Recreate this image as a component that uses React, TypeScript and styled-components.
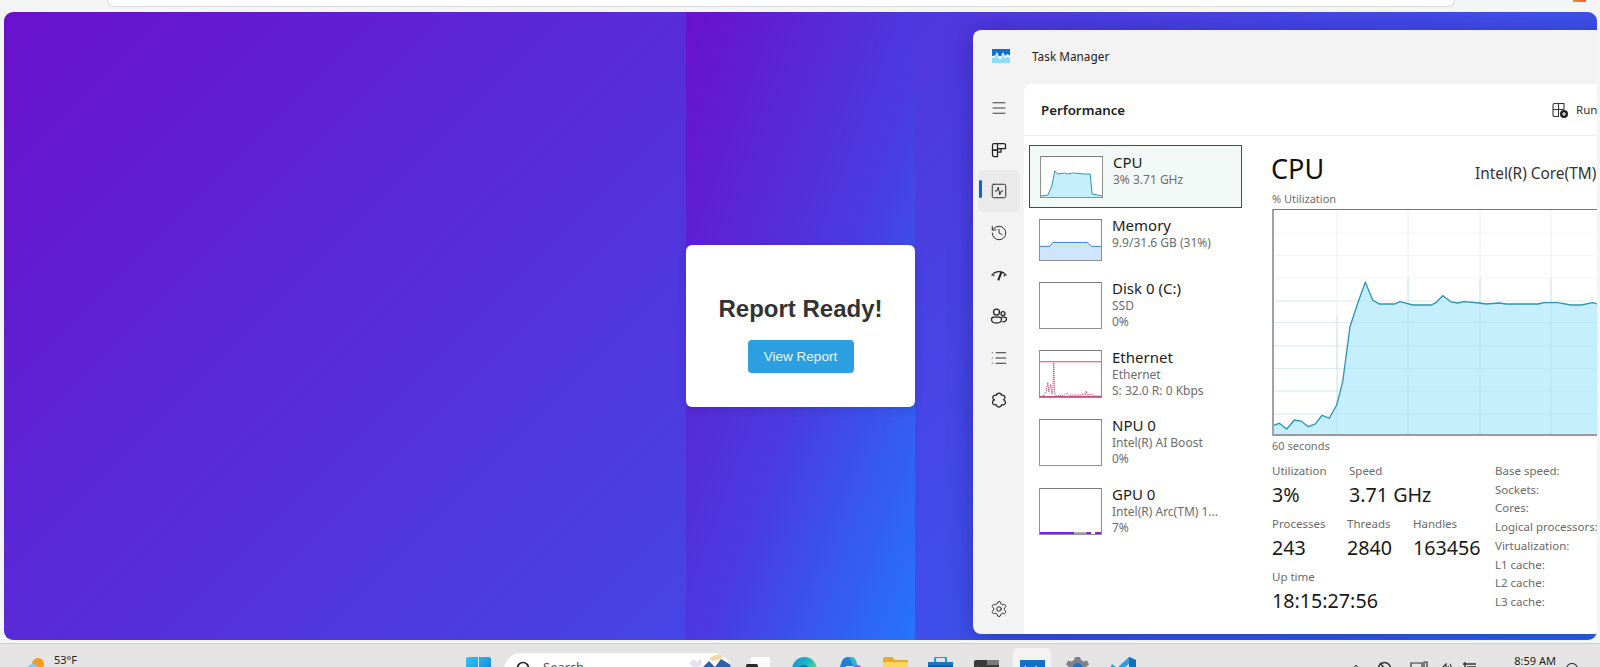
import React from "react";
import styled, { createGlobalStyle } from "styled-components";
import { Menu, SquareActivity, History, List, Settings } from "lucide-react";

const Global = createGlobalStyle`
  html, body { margin: 0; padding: 0; height: 100%; background: #f3f6f4; overflow: hidden; }
  #root { height: 100%; }
`;

const SEGOE = `"Noto Sans", "Open Sans", sans-serif`;

const Page = styled.div`
  width: 1600px;
  height: 667px;
  display: flex;
  flex-direction: column;
  overflow: hidden;
  background: #f3f6f4;
  font-family: ${SEGOE};
`;
const TopStrip = styled.div`
  height: 12px;
  flex: none;
  padding-left: 107px;
  display: flex;
`;
const AddressPill = styled.div`
  width: 1348px;
  height: 7px;
  background: #fff;
  border: 1px solid #dcdcdc;
  border-top: 0;
  border-radius: 0 0 14px 14px;
  box-sizing: border-box;
`;
const CornerBit = styled.div`
  width: 13px;
  height: 2px;
  margin-left: 118px;
  background: linear-gradient(90deg, #f28a3c, #e9642a);
`;
const Desktop = styled.div`
  height: 628px;
  flex: none;
  margin: 0 3px 3px 4px;
  border-radius: 9px;
  overflow: hidden;
  position: relative;
  background: linear-gradient(135deg, #6a11cb 0%, #2575fc 100%);
  background-size: 1800px 700px;
  display: grid;
  grid-template-columns: 682px 229px 1fr;
`;
const Band = styled.div`
  grid-column: 2;
  background: linear-gradient(to bottom right, #6a11cb 0%, #4a3be0 55%, #2575fc 100%);
  display: flex;
  align-items: center;
  justify-content: center;
`;
const Card = styled.div`
  width: 229px;
  height: 162px;
  padding-top: 16px;
  box-sizing: border-box;
  background: #fff;
  border-radius: 6px;
  display: flex;
  flex-direction: column;
  align-items: center;
  justify-content: center;
  box-shadow: 0 2px 8px rgba(0, 0, 0, 0.12);
  font-family: "Liberation Sans", Arial, sans-serif;
`;
const CardTitle = styled.h2`
  margin: 0 0 17px;
  font-size: 24px;
  line-height: 28px;
  font-weight: 700;
  color: #333;
`;
const ViewButton = styled.button`
  width: 106px;
  height: 33px;
  padding: 0;
  border: 0;
  border-radius: 4px;
  background: #2b9fe0;
  color: #eef7fc;
  font-family: inherit;
  font-size: 13.5px;
`;
const Win = styled.div`
  position: absolute;
  left: 969px;
  top: 18px;
  width: 700px;
  height: 604px;
  background: #f3f3f3;
  border-radius: 8px;
  box-shadow: 0 4px 24px rgba(0, 10, 80, 0.35);
  display: flex;
  flex-direction: column;
  overflow: hidden;
  color: #1b1b1b;
`;
const TitleBar = styled.div`
  height: 54px;
  flex: none;
  display: flex;
  align-items: center;
  padding: 0 0 2px 19px;
  box-sizing: border-box;
`;
const TitleText = styled.span`
  margin-left: 22px;
  font-size: 11.8px;
  color: #222;
`;
const MinGlyph = styled.span`
  width: 9px;
  height: 1px;
  margin-left: 488px;
  margin-top: -20px;
  background: #222;
`;
const WinBody = styled.div`
  flex: 1;
  display: flex;
  min-height: 0;
`;
const SideNav = styled.nav`
  width: 51px;
  flex: none;
  display: flex;
  flex-direction: column;
  align-items: center;
  padding-top: 3px;
  box-sizing: border-box;
  color: #222;
`;
const NavItem = styled.div<{ $active?: boolean; $bottom?: boolean }>`
  width: 42px;
  height: 41.7px;
  flex: none;
  display: flex;
  align-items: center;
  justify-content: center;
  border-radius: 6px;
  position: relative;
  margin-top: ${(p) => (p.$bottom ? "auto" : "0")};
  margin-bottom: ${(p) => (p.$bottom ? "4px" : "0")};
  background: ${(p) => (p.$active ? "#eaeaea" : "transparent")};
  ${(p) =>
    p.$active &&
    `&::before { content: ""; position: absolute; left: 1px; top: 10px; width: 3px; height: 18px; border-radius: 2px; background: #0f62c6; }`}
`;
const Main = styled.div`
  flex: 1;
  background: #fff;
  border-top-left-radius: 8px;
  display: flex;
  flex-direction: column;
  min-width: 0;
`;
const MainHeader = styled.header`
  height: 52px;
  flex: none;
  box-sizing: border-box;
  display: flex;
  align-items: center;
  padding-left: 17px;
  border-bottom: 1px solid #f1f1f1;
`;
const HeaderTitle = styled.h1`
  margin: 0;
  width: 510px;
  font-size: 13.3px;
  font-weight: 600;
  color: #222;
`;
const RunLabel = styled.span`
  margin-left: 7px;
  font-size: 11.5px;
  color: #333;
`;
const Content = styled.div`
  flex: 1;
  display: flex;
  min-height: 0;
`;
const ListCol = styled.div`
  width: 248px;
  flex: none;
  padding: 9px 0 0 5px;
  box-sizing: border-box;
`;
const Row = styled.div<{ $h: number; $selected?: boolean }>`
  width: 213px;
  height: ${(p) => p.$h}px;
  box-sizing: border-box;
  display: flex;
  align-items: center;
  padding-left: 10px;
  border: ${(p) => (p.$selected ? "1.5px solid #4a4a4a" : "0")};
  background: ${(p) => (p.$selected ? "#f3f9f6" : "transparent")};
`;
const Thumb = styled.div<{ $h: number }>`
  width: 63px;
  height: ${(p) => p.$h}px;
  flex: none;
  box-sizing: border-box;
  border: 1.5px solid #8f8f8f;
  border-top-color: #7c7c7c;
  background: #fff;
  overflow: hidden;
  & > svg { display: block; width: 100%; height: 100%; }
`;
const RowText = styled.div<{ $lift: number }>`
  margin-left: 10px;
  padding-bottom: ${(p) => p.$lift}px;
  display: flex;
  flex-direction: column;
`;
const RowName = styled.span`
  font-size: 15px;
  line-height: 20px;
  color: #1c1c1c;
`;
const RowSub = styled.span`
  font-size: 12px;
  line-height: 16px;
  color: #6d6d6d;
  white-space: nowrap;
`;
const Detail = styled.div`
  flex: 1;
  min-width: 0;
  padding-top: 15px;
`;
const DetailHead = styled.div`
  height: 40px;
  display: flex;
  align-items: baseline;
`;
const BigTitle = styled.span`
  width: 204px;
  margin-left: -1px;
  font-size: 27px;
  line-height: 36px;
  color: #111;
`;
const CpuModel = styled.span`
  font-size: 15.4px;
  color: #333;
  white-space: nowrap;
`;
const SmallNote = styled.div`
  font-size: 11px;
  line-height: 16px;
  color: #6d6d6d;
`;
const ChartBox = styled.div`
  width: 340px;
  height: 227px;
  margin-top: 2px;
  margin-bottom: 2px;
  box-sizing: border-box;
  border-left: 2px solid #a2a2a2;
  border-top: 1px solid #777;
  border-bottom: 2px solid #9a9a9a;
  & > svg { display: block; }
`;
const StatsArea = styled.div`
  margin-top: 8px;
  display: flex;
`;
const StatsCol = styled.div`
  width: 223px;
  flex: none;
  display: flex;
  flex-direction: column;
  gap: 5px;
`;
const StatRow = styled.div`
  display: flex;
`;
const Stat = styled.div<{ $w?: number }>`
  width: ${(p) => (p.$w ? `${p.$w}px` : "auto")};
  flex: none;
  display: flex;
  flex-direction: column;
`;
const StatLabel = styled.span`
  font-size: 11.5px;
  line-height: 18px;
  color: #6a6a6a;
`;
const StatValue = styled.span`
  font-size: 19.7px;
  line-height: 30px;
  color: #1a1a1a;
  white-space: nowrap;
`;
const SpecCol = styled.div`
  display: flex;
  flex-direction: column;
  font-size: 11.5px;
  line-height: 18.7px;
  color: #6a6a6a;
  white-space: nowrap;
`;
const Taskbar = styled.footer`
  height: 24px;
  flex: none;
  box-sizing: border-box;
  border-top: 1px solid #cfcfcf;
  background: #e4e4e4;
  display: flex;
  overflow: hidden;
`;
const WeatherGroup = styled.div`
  width: 466px;
  flex: none;
  padding-left: 27px;
  box-sizing: border-box;
  display: flex;
`;
const WeatherText = styled.span`
  margin-left: 9px;
  margin-top: 9px;
  font-size: 11px;
  line-height: 14px;
  color: #222;
`;
const Slot = styled.div<{ $top: number; $active?: boolean }>`
  width: 25px;
  flex: none;
  margin-top: ${(p) => p.$top}px;
  position: relative;
  ${(p) =>
    p.$active &&
    `&::before { content: ""; position: absolute; left: -7px; right: -6px; top: -12px; height: 40px; background: #f3f3f3; border-radius: 4px; }`}
  & > svg { display: block; position: relative; }
`;
const SearchPill = styled.div`
  width: 227px;
  height: 34px;
  margin: 9px 15px 0 13px;
  flex: none;
  background: #fff;
  border-radius: 17px;
  display: flex;
  align-items: flex-start;
  padding-left: 12px;
  box-sizing: border-box;
  overflow: hidden;
`;
const SearchText = styled.span`
  margin-left: 11px;
  margin-top: 5px;
  font-size: 13px;
  line-height: 18px;
  color: #555;
`;
const SearchArt = styled.div`
  margin-left: auto;
`;
const AppRow = styled.div`
  display: flex;
  gap: 20.6px;
`;
const Tray = styled.div`
  margin-left: auto;
  padding-right: 22px;
  display: flex;
`;
const TrayItem = styled.div<{ $ml: number; $top: number }>`
  display: flex;
  margin-left: ${(p) => p.$ml}px;
  margin-top: ${(p) => p.$top}px;
  color: #333;
  & > svg { display: block; }
`;
const Clock = styled.span`
  font-size: 11px;
  line-height: 14px;
  color: #222;
  white-space: nowrap;
`;

const chartRaw: [number, number][] = [
  [38, 1008], [60, 1000], [82, 1017], [105, 990], [125, 993], [147, 1010], [168, 1002], [188, 976], [210, 985],
  [232, 945], [250, 875], [272, 710], [295, 640], [318, 577], [340, 630], [360, 642], [405, 642], [422, 635],
  [460, 645], [515, 645], [530, 638], [550, 617], [575, 636], [595, 639], [615, 635], [660, 639], [680, 642],
  [720, 639], [740, 642], [835, 642], [855, 638], [895, 638], [935, 645], [965, 645], [1000, 638], [1030, 646],
  [1060, 646],
];
const chartPts = chartRaw.map(([x, y]) => `${(x / 3 - 14.67).toFixed(1)},${(y / 3 - 120).toFixed(1)}`).join(" ");
const vLines = [63, 134, 206, 277];
const hLines = [23, 45.5, 68, 91, 112.5, 136, 158.5, 181, 204];

const CpuChart = () => (
  <svg width="338" height="224" viewBox="0 0 338 224">
    {hLines.map((y) => (
      <line key={y} x1="0" x2="338" y1={y} y2={y} stroke="#f4f4f4" />
    ))}
    {vLines.map((x) => (
      <line key={x} y1="0" y2="224" x1={x} x2={x} stroke="#eeeeee" />
    ))}
    <polygon points={`0,224 ${chartPts} 338,224`} fill="#c6effd" />
    {hLines.filter((y) => y > 80).map((y) => (
      <line key={y} x1="0" x2="338" y1={y} y2={y} stroke="#aedbe9" strokeOpacity="0.35" />
    ))}
    {vLines.map((x) => (
      <line key={x} y1={x === 63 ? 105 : 68} y2="224" x1={x} x2={x} stroke="#aedbe9" strokeOpacity="0.55" />
    ))}
    <polyline points={chartPts} fill="none" stroke="#2b93b4" strokeWidth="1.3" />
  </svg>
);

const CpuThumb = () => (
  <svg viewBox="0 0 62 40" preserveAspectRatio="none">
    <polygon points="0,39 7,38 11,29 14,14 17,17 50,17 52,37 62,39 62,40 0,40" fill="#c6effd" />
    <polyline points="0,39 7,38 11,29 14,14 17,17 24,16 27,17 33,16 44,17 50,17 52,37 62,39" fill="none" stroke="#2b93b4" />
  </svg>
);
const MemThumb = () => (
  <svg viewBox="0 0 62 41" preserveAspectRatio="none">
    <polygon points="0,27 10,27 13,23 48,23 52,27 62,27 62,41 0,41" fill="#cfe5fb" />
    <polyline points="0,27 10,27 13,23 48,23 52,27 62,27" fill="none" stroke="#2f7fe0" />
  </svg>
);
const EthThumb = () => (
  <svg viewBox="0 0 62 47" preserveAspectRatio="none">
    <line x1="0" x2="62" y1="11" y2="11" stroke="#d63c74" />
    <polyline
      points="3,46 6,42 8,32 9,42 11,34 12,44 13,40 14,12 15,44 16,46 25,45 27,43 29,45 40,45 46,44 47,41 48,45 52,44 55,46 62,46"
      fill="none"
      stroke="#d63c74"
      strokeWidth="1"
      strokeDasharray="1.2 0.8"
    />
    <line x1="0" x2="62" y1="46.5" y2="46.5" stroke="#c04a78" />
  </svg>
);
const GpuThumb = () => (
  <svg viewBox="0 0 62 46" preserveAspectRatio="none">
    <line x1="0" x2="35" y1="45" y2="45" stroke="#7a22d8" strokeWidth="2" />
    <line x1="35" x2="47" y1="45" y2="45" stroke="#a9a9a9" strokeWidth="2" />
    <line x1="47" x2="52" y1="45" y2="45" stroke="#7a22d8" strokeWidth="2" />
    <line x1="56" x2="62" y1="45" y2="45" stroke="#7a22d8" strokeWidth="2" />
  </svg>
);

const ico = { width: 18, height: 18, viewBox: "0 0 18 18", fill: "none", stroke: "currentColor", strokeWidth: 1.25 } as const;
const ProcIcon = () => (
  <svg {...ico}>
    <path d="M2.500 4A1.500 1.500 0 0 1 4 2.500h3.500V9h-5V4Z" />
    <path d="M7.500 2.500H14A1.500 1.500 0 0 1 15.500 4v3.500h-8" />
    <path d="M2.500 9h5v6.500H4A1.500 1.500 0 0 1 2.500 14V9Z" />
    <path d="M7.500 7.500H11V11H7.500" />
  </svg>
);
const GaugeIcon = () => (
  <svg {...ico}>
    <path d="M1.500 9.500C3.500 6.800 6 5.500 9 5.500s5.500 1.300 7.500 4" />
    <path d="M11.500 5.800 8.200 14.400" strokeWidth="2" />
    <path d="M3 10l1.300-1M15 10l-1.300-1" />
  </svg>
);
const UsersIcon = () => (
  <svg {...ico}>
    <circle cx="6.500" cy="5" r="3" />
    <circle cx="13" cy="6.500" r="2" />
    <path d="M1.500 12.500c0-1.500 1-2.500 2.300-2.500h5.400c1.300 0 2.300 1 2.300 2.500 0 2-2 3.500-5 3.500s-5-1.500-5-3.500Z" />
    <path d="M11.500 10h3c1.200 0 2 .8 2 2 0 1.700-1.500 2.800-4.200 2.800" />
  </svg>
);
const ServicesIcon = () => (
  <svg {...ico}>
    <path d="M9 2c1.400 0 2.300 1 2.500 2.200 1.500-.5 3.500.4 3.500 2.300 0 1-.6 1.800-1.300 2.300.9.500 1.800 1.300 1.800 2.600 0 2-2 3-3.700 2.400C11.300 15.200 10.300 16 9 16c-1.400 0-2.500-1-2.800-2.200-1.700.6-3.700-.4-3.700-2.400 0-1.300.8-2.100 1.700-2.500-.8-.5-1.400-1.400-1.400-2.400 0-1.900 2-2.800 3.600-2.300C6.600 3 7.600 2 9 2Z" />
  </svg>
);

const TmLogo = ({ w = 18, h = 14 }: { w?: number; h?: number }) => (
  <svg width={w} height={h} viewBox="0 0 18 14" preserveAspectRatio="xMidYMin slice">
    <rect width="18" height="7" fill="#1170cf" />
    <rect y="7" width="18" height="7" fill="#8ddcf8" />
    <path d="M0 7 3 6.500 5 3 7 7.500 9 7.500 11 3 13 7 15 5 18 6.500 18 9 15 7.500 13 9.500 11 6 9 10 7 10 5 6 3 8.500 0 9Z" fill="#eefaff" />
  </svg>
);
const RunIcon = () => (
  <svg width="18" height="18" viewBox="0 0 18 18" fill="none" stroke="#333" strokeWidth="1.100">
    <path d="M2 4a1.500 1.500 0 0 1 1.500-1.500H13V8M7.500 2.500V15M2 8.500h11M2 4v10a1.500 1.500 0 0 0 1.500 1.500H8" />
    <circle cx="13" cy="13" r="4" fill="#222" stroke="none" />
    <path d="M13 11v4M11 13h4" stroke="#fff" />
  </svg>
);

const StartIcon = () => (
  <svg width="25" height="25" viewBox="0 0 25 25">
    <defs>
      <linearGradient id="st" x1="0" y1="0" x2="1" y2="1">
        <stop offset="0" stopColor="#35c3f6" />
        <stop offset="1" stopColor="#0a78d4" />
      </linearGradient>
    </defs>
    <path d="M0 2 Q0 0 2 0H12V12H0ZM13 0H23Q25 0 25 2V12H13ZM0 13H12V25H2Q0 25 0 23ZM13 13H25V23Q25 25 23 25H13Z" fill="url(#st)" />
  </svg>
);
const TaskViewIcon = () => (
  <svg width="25" height="25" viewBox="0 0 25 25">
    <rect x="5" y="0" width="19" height="20" rx="1.500" fill="#fbfbfb" />
    <rect x="0" y="7" width="12" height="18" rx="1.500" fill="#2b2b2b" />
  </svg>
);
const EdgeIcon = () => (
  <svg width="25" height="25" viewBox="0 0 25 25">
    <defs>
      <linearGradient id="ed" x1="0" y1="0" x2="1" y2="0.6">
        <stop offset="0" stopColor="#1a8ac8" />
        <stop offset="0.55" stopColor="#1fb6c9" />
        <stop offset="1" stopColor="#6fdc6a" />
      </linearGradient>
    </defs>
    <circle cx="12.500" cy="12.500" r="12.500" fill="url(#ed)" />
    <path d="M5 12c2-5 11-6 13 1-3-2-9-3-13-1Z" fill="#1273bd" />
  </svg>
);
const CopilotIcon = () => (
  <svg width="25" height="25" viewBox="0 0 25 25">
    <path d="M5 4Q7 0 11 0h3l3 9H9L4 25Q0 22 1 15Z" fill="#1d7fd6" />
    <path d="M11 0h3Q18 0 19 4l3 8-5-1-3-7Q13 1 11 0Z" fill="#26b8c9" />
    <path d="M17 8h4q4 0 4 6 0 4-3 8l-6 3 2-6Z" fill="#c94fd0" />
  </svg>
);
const FolderIcon = () => (
  <svg width="25" height="25" viewBox="0 0 25 25">
    <path d="M0 2Q0 0 2 0H9L12 3H25V8H0Z" fill="#e9a92b" />
    <rect x="0" y="5" width="25" height="20" rx="1.500" fill="#fbd661" />
  </svg>
);
const StoreIcon = () => (
  <svg width="25" height="25" viewBox="0 0 25 25">
    <path d="M7 5V2Q7 0 9 0H16Q18 0 18 2V5" fill="none" stroke="#18a0d8" strokeWidth="2" />
    <rect x="0" y="5" width="25" height="20" rx="2" fill="#0f5fa8" />
    <rect x="0" y="5" width="25" height="3" fill="#1876c4" />
  </svg>
);
const TerminalIcon = () => (
  <svg width="25" height="25" viewBox="0 0 25 25">
    <rect x="0" y="0" width="25" height="25" rx="2" fill="#3a3a3a" />
    <rect x="13" y="0" width="12" height="5" fill="#7a7a7a" />
    <path d="M3 7l4 3-4 3" stroke="#fff" fill="none" strokeWidth="1.200" />
  </svg>
);
const GearIcon = () => (
  <svg width="25" height="25" viewBox="0 0 25 25">
    <path d="M10 0h5l1 3 3 1.500 3-1 2 4-2.500 2v4l2.500 2-2 4-3-1L16 20l-1 5h-5l-1-5-3-1.500-3 1-2-4 2.500-2v-4L1 7.500l2-4 3 1L9 3Z" fill="#7d8388" />
    <circle cx="12.500" cy="11" r="5" fill="#1f6fc4" />
  </svg>
);
const CodeIcon = () => (
  <svg width="25" height="25" viewBox="0 0 25 25">
    <path d="M18 0 25 3V22L18 25 6 14 1 18 0 16V9L1 7 6 11Z" fill="#2b9fe6" />
    <path d="M18 0 25 3V22L18 25Z" fill="#1173bd" />
    <path d="M18 7v11l-7-5.500Z" fill="#e4e4e4" />
  </svg>
);
const WeatherIcon = () => (
  <svg width="18" height="22" viewBox="0 0 18 22" style={{ marginTop: 14 }}>
    <circle cx="11" cy="6" r="6" fill="#f49a1c" />
    <ellipse cx="6" cy="11" rx="6" ry="5" fill="#8fc6ee" />
  </svg>
);
const SearchGlyph = () => (
  <svg width="16" height="16" viewBox="0 0 16 16" fill="none" stroke="#222" strokeWidth="1.700" style={{ marginTop: 8 }}>
    <circle cx="7" cy="7" r="5.500" />
    <path d="M11 11l4 4" />
  </svg>
);
const SearchScene = () => (
  <svg width="42" height="24" viewBox="0 0 42 24" style={{ display: "block" }}>
    <path d="M14 14 20 8l6 6 6-8 10 6v12H14Z" fill="#2f5fa8" />
    <path d="M20 6q6-6 14-4l-2 4-8 2Z" fill="#f2d9a6" />
    <path d="M0 10l5-4 3 3 4-3 1 6-8 3Z" fill="#e9dff0" />
  </svg>
);

export default function App() {
  return (
    <Page>
      <Global />
      <TopStrip>
        <AddressPill />
        <CornerBit />
      </TopStrip>
      <Desktop>
        <Band>
          <Card>
            <CardTitle>Report Ready!</CardTitle>
            <ViewButton>View Report</ViewButton>
          </Card>
        </Band>
        <Win>
          <TitleBar>
            <TmLogo />
            <TitleText>Task Manager</TitleText>
            <MinGlyph />
          </TitleBar>
          <WinBody>
            <SideNav>
              <NavItem><Menu size={18} strokeWidth={1.15} /></NavItem>
              <NavItem><ProcIcon /></NavItem>
              <NavItem $active><SquareActivity size={18} strokeWidth={1.25} /></NavItem>
              <NavItem><History size={18} strokeWidth={1.25} /></NavItem>
              <NavItem><GaugeIcon /></NavItem>
              <NavItem><UsersIcon /></NavItem>
              <NavItem><List size={18} strokeWidth={1.25} /></NavItem>
              <NavItem><ServicesIcon /></NavItem>
              <NavItem $bottom><Settings size={18} strokeWidth={1.25} /></NavItem>
            </SideNav>
            <Main>
              <MainHeader>
                <HeaderTitle>Performance</HeaderTitle>
                <RunIcon />
                <RunLabel>Run</RunLabel>
              </MainHeader>
              <Content>
                <ListCol>
                  <Row $h={63} $selected>
                    <Thumb $h={42}><CpuThumb /></Thumb>
                    <RowText $lift={13}>
                      <RowName>CPU</RowName>
                      <RowSub>3% 3.71 GHz</RowSub>
                    </RowText>
                  </Row>
                  <Row $h={64}>
                    <Thumb $h={42}><MemThumb /></Thumb>
                    <RowText $lift={14}>
                      <RowName>Memory</RowName>
                      <RowSub>9.9/31.6 GB (31%)</RowSub>
                    </RowText>
                  </Row>
                  <Row $h={67}>
                    <Thumb $h={47} />
                    <RowText $lift={4}>
                      <RowName>Disk 0 (C:)</RowName>
                      <RowSub>SSD</RowSub>
                      <RowSub>0%</RowSub>
                    </RowText>
                  </Row>
                  <Row $h={70}>
                    <Thumb $h={48}><EthThumb /></Thumb>
                    <RowText $lift={3}>
                      <RowName>Ethernet</RowName>
                      <RowSub>Ethernet</RowSub>
                      <RowSub>S: 32.0 R: 0 Kbps</RowSub>
                    </RowText>
                  </Row>
                  <Row $h={67}>
                    <Thumb $h={47} />
                    <RowText $lift={4}>
                      <RowName>NPU 0</RowName>
                      <RowSub>Intel(R) AI Boost</RowSub>
                      <RowSub>0%</RowSub>
                    </RowText>
                  </Row>
                  <Row $h={71}>
                    <Thumb $h={47}><GpuThumb /></Thumb>
                    <RowText $lift={4}>
                      <RowName>GPU 0</RowName>
                      <RowSub>Intel(R) Arc(TM) 1...</RowSub>
                      <RowSub>7%</RowSub>
                    </RowText>
                  </Row>
                </ListCol>
                <Detail>
                  <DetailHead>
                    <BigTitle>CPU</BigTitle>
                    <CpuModel>Intel(R) Core(TM)</CpuModel>
                  </DetailHead>
                  <SmallNote>% Utilization</SmallNote>
                  <ChartBox><CpuChart /></ChartBox>
                  <SmallNote>60 seconds</SmallNote>
                  <StatsArea>
                    <StatsCol>
                      <StatRow>
                        <Stat $w={77}><StatLabel>Utilization</StatLabel><StatValue>3%</StatValue></Stat>
                        <Stat><StatLabel>Speed</StatLabel><StatValue>3.71 GHz</StatValue></Stat>
                      </StatRow>
                      <StatRow>
                        <Stat $w={75}><StatLabel>Processes</StatLabel><StatValue>243</StatValue></Stat>
                        <Stat $w={66}><StatLabel>Threads</StatLabel><StatValue>2840</StatValue></Stat>
                        <Stat><StatLabel>Handles</StatLabel><StatValue>163456</StatValue></Stat>
                      </StatRow>
                      <StatRow>
                        <Stat><StatLabel>Up time</StatLabel><StatValue>18:15:27:56</StatValue></Stat>
                      </StatRow>
                    </StatsCol>
                    <SpecCol>
                      <span>Base speed:</span>
                      <span>Sockets:</span>
                      <span>Cores:</span>
                      <span>Logical processors:</span>
                      <span>Virtualization:</span>
                      <span>L1 cache:</span>
                      <span>L2 cache:</span>
                      <span>L3 cache:</span>
                    </SpecCol>
                  </StatsArea>
                </Detail>
              </Content>
            </Main>
          </WinBody>
        </Win>
      </Desktop>
      <Taskbar>
        <WeatherGroup>
          <WeatherIcon />
          <WeatherText>53°F</WeatherText>
        </WeatherGroup>
        <Slot $top={13}><StartIcon /></Slot>
        <SearchPill>
          <SearchGlyph />
          <SearchText>Search</SearchText>
          <SearchArt><SearchScene /></SearchArt>
        </SearchPill>
        <AppRow>
          <Slot $top={13}><TaskViewIcon /></Slot>
          <Slot $top={13}><EdgeIcon /></Slot>
          <Slot $top={13}><CopilotIcon /></Slot>
          <Slot $top={13}><FolderIcon /></Slot>
          <Slot $top={13}><StoreIcon /></Slot>
          <Slot $top={16}><TerminalIcon /></Slot>
          <Slot $top={16} $active><TmLogo w={25} h={25} /></Slot>
          <Slot $top={13}><GearIcon /></Slot>
          <Slot $top={13}><CodeIcon /></Slot>
        </AppRow>
        <Tray>
          <TrayItem $ml={0} $top={20}>
            <svg width="8" height="6" viewBox="0 0 8 6" fill="none" stroke="#333"><path d="M1 5l3-4 3 4" /></svg>
          </TrayItem>
          <TrayItem $ml={16} $top={16}>
            <svg width="17" height="17" viewBox="0 0 17 17" fill="none" stroke="#333" strokeWidth="1.500"><circle cx="8.500" cy="8.500" r="6" /><path d="M4 3l9 11" /></svg>
          </TrayItem>
          <TrayItem $ml={17} $top={17}>
            <svg width="18" height="14" viewBox="0 0 18 14" fill="none" stroke="#333" strokeWidth="1.200"><path d="M1 12V2h11v10M14 1h3v8h-3z" /></svg>
          </TrayItem>
          <TrayItem $ml={10} $top={18}>
            <svg width="15" height="14" viewBox="0 0 15 14" fill="none" stroke="#333" strokeWidth="1.200"><path d="M1 6h3l4-4v10L4 8H1zM10 4q2 3 0 6M12 2q3 5 0 10" /></svg>
          </TrayItem>
          <TrayItem $ml={10} $top={17}>
            <svg width="14" height="14" viewBox="0 0 14 14" fill="none" stroke="#333" strokeWidth="1.400"><path d="M2 1v8M0 3h13M4 6h9M2 9h11" /></svg>
          </TrayItem>
          <TrayItem $ml={37} $top={10}><Clock>8:59 AM</Clock></TrayItem>
          <TrayItem $ml={10} $top={19}>
            <svg width="12" height="12" viewBox="0 0 12 12" fill="none" stroke="#333" strokeWidth="1.100"><circle cx="6" cy="6" r="5.500" /></svg>
          </TrayItem>
        </Tray>
      </Taskbar>
    </Page>
  );
}
